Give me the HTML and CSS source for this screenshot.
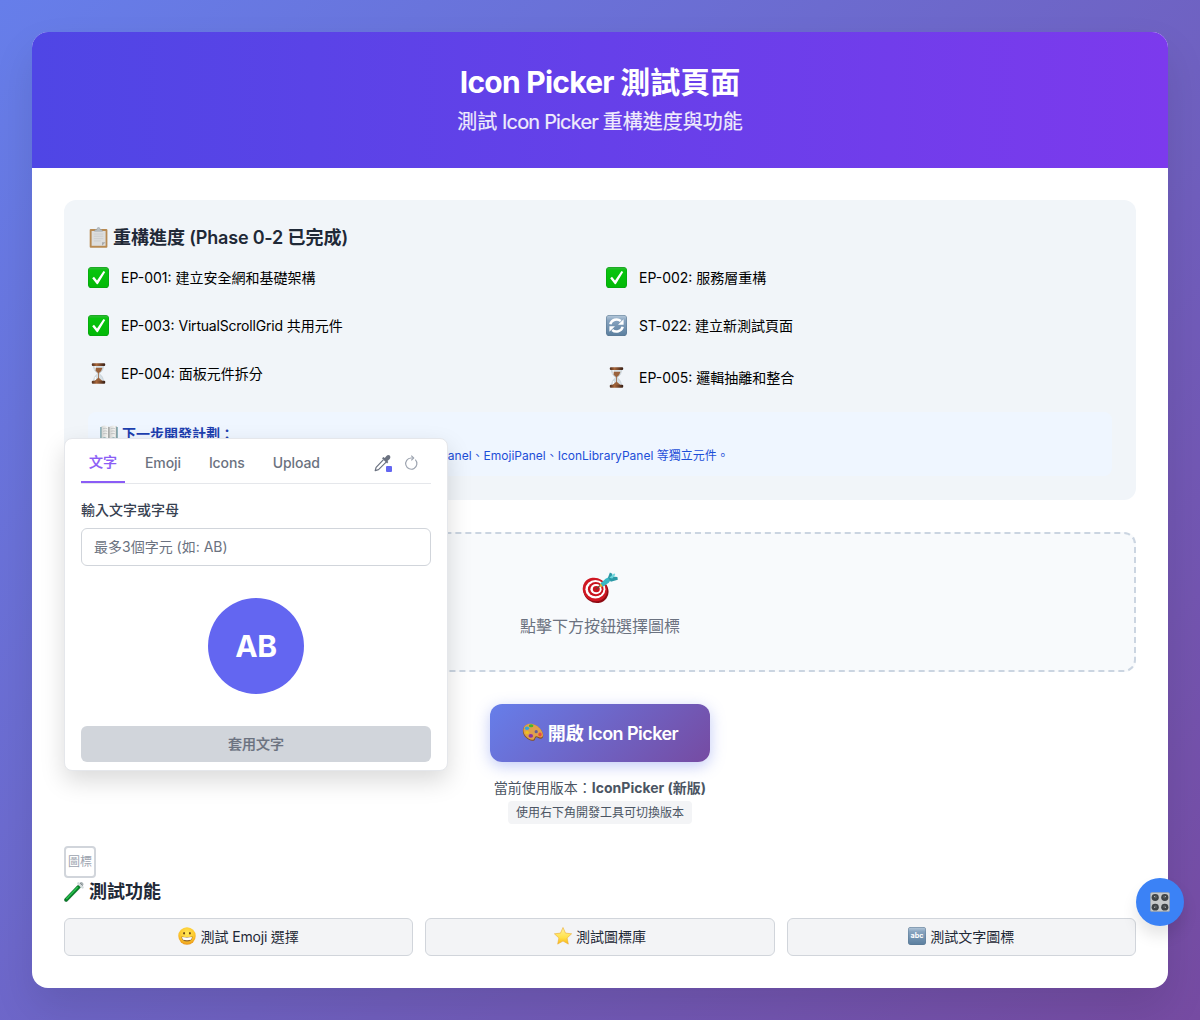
FILE: index.html
```html
<!DOCTYPE html>
<html lang="zh-TW">
<head>
<meta charset="UTF-8">
<title>Icon Picker 測試頁面</title>
<link rel="stylesheet" href="styles.css">
</head>
<body>
<svg class="defs" width="0" height="0" aria-hidden="true">
  <defs>
    <linearGradient id="g-green" x1="0" y1="0" x2="0" y2="1"><stop offset="0" stop-color="#35b83a"/><stop offset=".15" stop-color="#08c40d"/><stop offset="1" stop-color="#02b907"/></linearGradient>
    <linearGradient id="g-blue" x1="0" y1="0" x2="0" y2="1"><stop offset="0" stop-color="#b4c8da"/><stop offset=".25" stop-color="#87a3bf"/><stop offset="1" stop-color="#5b7f9f"/></linearGradient>
    <linearGradient id="g-wood" x1="0" y1="0" x2="1" y2="0"><stop offset="0" stop-color="#4b2c1d"/><stop offset=".35" stop-color="#a8663a"/><stop offset="1" stop-color="#351d14"/></linearGradient>
    <linearGradient id="g-star" x1="0" y1="0" x2="0" y2="1"><stop offset="0" stop-color="#fff3a0"/><stop offset=".6" stop-color="#ffe14a"/><stop offset="1" stop-color="#f9b717"/></linearGradient>
    <linearGradient id="g-page" x1="0" y1="0" x2="1" y2="0"><stop offset="0" stop-color="#d5d6d4"/><stop offset=".8" stop-color="#f7f7f5"/><stop offset="1" stop-color="#a9aaa8"/></linearGradient>
    <radialGradient id="g-face" cx=".5" cy=".35" r=".65"><stop offset="0" stop-color="#ffe95c"/><stop offset=".65" stop-color="#fdc82c"/><stop offset="1" stop-color="#e9961b"/></radialGradient>
    <symbol id="check" viewBox="0 0 21 21"><rect width="21" height="21" rx="3.6" fill="#079b12"/><rect x=".5" y=".5" width="20" height="20" rx="3.2" fill="url(#g-green)"/><path d="M4.2 11.3 6 9.8l3 3.6 6.5-9.3 1.7.8-7.1 11.8q-.8 1-1.6 0Z" fill="#fff"/></symbol>
    <symbol id="refresh" viewBox="0 0 21 21"><rect width="21" height="21" rx="3.6" fill="#5a7791"/><rect x=".5" y=".5" width="20" height="20" rx="3.2" fill="url(#g-blue)"/><g fill="none" stroke="#fff" stroke-width="2.5"><path d="M4.300 9.300A6.500 6.500 0 0 1 14.800 6M16.700 11.700A6.500 6.500 0 0 1 6.200 15"/></g><path d="M17.600 4.200v5.600h-5.600ZM3.400 16.800v-5.600h5.600Z" fill="#fff"/></symbol>
    <symbol id="hourglass" viewBox="0 0 21 21"><path d="M5.500 2.500h10q.2 5-4 7.800v.7q4.100 2.800 4 7.800h-10q-.1-5 4-7.800v-.7Q5.300 7.500 5.500 2.500Z" fill="#d6e0e6" stroke="#b4bfc5" stroke-width=".5"/><path d="M6.500 4.800h8q-.8 3.500-3.500 5.200h-1q-2.700-1.700-3.500-5.200ZM10.500 14.500l4.200 3.700H6.300Z" fill="#9a623c"/><path d="M10.500 10v5" stroke="#9a623c" stroke-width=".8"/><path d="M7.200 3.200v3.500M7.300 14v3" stroke="#fff" stroke-width="1"/><rect x="3.800" y=".2" width="13.400" height="2.900" rx="1" fill="url(#g-wood)"/><rect x="3.800" y="17.800" width="13.400" height="2.900" rx="1" fill="url(#g-wood)"/></symbol>
    <symbol id="clipboard" viewBox="0 0 21 21"><rect x="1.700" y="2" width="17.700" height="18.700" rx="1" fill="#b88a52"/><path d="M3.600 4h14v14.800h-14Z" fill="#dcdddd"/><path d="M14 18.800v-3.600h3.600Z" fill="#a9aaab"/><path d="M5.800 7h9.500M5.800 9.300h9.500M5.800 11.600h9.500M5.800 13.900h7" stroke="#c9cbcc" stroke-width=".8"/><path d="M6.500 4.300q0-2 2.500-2 .2-2 1.500-2t1.500 2q2.500 0 2.500 2Z" fill="#b9c0c4" stroke="#8c969c" stroke-width=".4"/></symbol>
    <symbol id="book" viewBox="0 0 21 21"><path d="M.5 3.500h20v15h-20Z" fill="#4c8790"/><path d="M1.600 2.500q5-2 8.900 1v14q-4-3-8.900-1Z" fill="url(#g-page)"/><path d="M19.400 2.500q-5-2-8.900 1v14q4-3 8.900-1Z" fill="url(#g-page)"/><path d="M3.500 5.500q3-1 5 0m-5 3q3-1 5 0m-5 3q3-1 5 0m4-6q3-1 5 0m-5 3q3-1 5 0m-5 3q3-1 5 0" stroke="#a5a9ab" stroke-width=".6" fill="none"/><path d="M10.500 3.500v14" stroke="#75797b" stroke-width=".7"/></symbol>
    <symbol id="target" viewBox="0 0 36 36"><ellipse cx="13.900" cy="18.800" rx="13" ry="11.900" transform="rotate(35 13.900 18.800)" fill="#8d0b13"/><ellipse cx="12.900" cy="17.500" rx="12.500" ry="11.500" transform="rotate(35 12.900 17.500)" fill="#cf1722"/><ellipse cx="13.400" cy="17.200" rx="10" ry="9.200" fill="#fff"/><ellipse cx="13.700" cy="17.200" rx="7.800" ry="7.100" fill="#c9131e"/><ellipse cx="14" cy="17.200" rx="5.600" ry="5.100" fill="#fff"/><ellipse cx="14.300" cy="17.100" rx="3.500" ry="3.200" fill="#c9131e"/><path d="m14 17.300 5.500-5.300" stroke="#5b4b36" stroke-width="1.100"/><path d="m17.300 13.200 2.500-2.700 2.200 2.300-2.900 2.400Z" fill="#e8b629"/><path d="m18.600 11.300 5-4.500 4.400-2.400 1.800 1.800-3 4.600-5.900 3.900Z" fill="#39b6c4"/><path d="m26 5.600 1.900-5.200 2.400 1.400.1 2.700 5 .6.400 2.700-7 2Z" fill="#2b99a6"/><path d="m27.300 5.700 5-4.500 1 1.600-3 3.800Z" fill="#6ed6dc"/></symbol>
    <symbol id="palette" viewBox="0 0 22 22"><path d="M2.700 5.300C7 .7 15.500 3.500 19.300 9.300c2.800 4.300 2.600 8.600-.8 8.400-2.300-.1-3.200-2.300-4.800-1-1.200 1-.1 3.100-3.200 3.100C4 19.400-2.300 11 2.700 5.300Z" fill="#8c5216"/><path d="M2.900 4.800C7.200.5 15.400 3.300 19.100 8.900c2.700 4.100 2.500 7.900-.6 7.700-2.300-.2-3.500-2.200-5.200-.9-1.300 1-.3 3.100-3.200 3C4.300 18.200-1.500 10.400 2.900 4.800Z" fill="#dfa04d"/><circle cx="14.200" cy="10.700" r="1.600" fill="#665d99"/><ellipse cx="9.100" cy="4.700" rx="2.300" ry="1.500" fill="#45b72d"/><ellipse cx="5" cy="7.300" rx="2.200" ry="1.800" fill="#30a4dd"/><ellipse cx="5" cy="11.400" rx="1.900" ry="1.500" fill="#edc21d"/><ellipse cx="8.800" cy="14.900" rx="2.300" ry="1.800" fill="#8d31a6"/><ellipse cx="18" cy="13.500" rx="1.700" ry="2.100" fill="#ea4b42"/></symbol>
    <symbol id="tube" viewBox="0 0 21 21"><path d="M2.100 18.900 17.300 3.300" stroke="#a7b0b2" stroke-width="4.200" stroke-linecap="round"/><path d="M2.200 18.800 14.500 6.100" stroke="#087d26" stroke-width="3.600" stroke-linecap="round"/><path d="m2.300 17.900 11.500-12" stroke="#2cc453" stroke-width="1.400"/><path d="m14.300 2.300 4.300 4.100" stroke="#d5dcdd" stroke-width="2.400" stroke-linecap="round"/><path d="m16 2.100 2.600 2.400" stroke="#858e91" stroke-width="1"/></symbol>
    <symbol id="grin" viewBox="0 0 18 18"><circle cx="9" cy="9" r="8.700" fill="url(#g-face)"/><ellipse cx="6.100" cy="6.300" rx=".9" ry="1.300" fill="#6b4518"/><ellipse cx="11.900" cy="6.300" rx=".9" ry="1.300" fill="#6b4518"/><path d="M3.400 9.600q5.600 1 11.200 0-.4 5-5.600 5t-5.600-5Z" fill="#8f6226"/><path d="M4 10.100q5 .8 10 0-.2 1.700-1 2.700-4 .8-8 0-.8-1-1-2.700Z" fill="#fff"/></symbol>
    <symbol id="star" viewBox="0 0 18 18"><path d="m9 .5 2.500 5.600 6.100.7-4.500 4.200 1.200 6.100L9 14l-5.300 3.100L4.900 11 .4 6.800l6.100-.7Z" fill="url(#g-star)" stroke="#ecac31" stroke-width=".6" stroke-linejoin="round"/></symbol>
    <symbol id="abc" viewBox="0 0 18 18"><rect width="18" height="18" rx="3" fill="#5a7791"/><rect x=".4" y=".4" width="17.200" height="17.200" rx="2.700" fill="url(#g-blue)"/><text x="9" y="11" text-anchor="middle" textLength="13" lengthAdjust="spacingAndGlyphs" class="abc">abc</text></symbol>
    <symbol id="knobs" viewBox="0 0 20 20"><rect x=".2" y=".2" width="19.600" height="19.600" rx="1.600" fill="#a9adb0"/><rect x="1" y="1" width="18" height="18" rx="1" fill="#c6c9ca"/><g fill="#3e4346"><ellipse cx="5.200" cy="5.500" rx="3.600" ry="3.400"/><ellipse cx="14.800" cy="5.500" rx="3.600" ry="3.400"/><ellipse cx="5.200" cy="15.200" rx="3.600" ry="3.400"/><ellipse cx="14.800" cy="15.200" rx="3.600" ry="3.400"/></g><g fill="#5a6063"><circle cx="5.500" cy="5" r="1.400"/><circle cx="14.500" cy="5" r="1.400"/><circle cx="5.500" cy="14.700" r="1.400"/><circle cx="14.500" cy="14.700" r="1.400"/></g><path d="m5 5-1-1M15 5l1-1M5 15l-1 .7M15 15l1 .7" stroke="#d4d4d4" stroke-width=".7"/></symbol>
  </defs>
</svg>

<div class="card">
  <header class="hero">
    <h1><span class="latin">Icon Picker </span>測試頁面</h1>
    <p>測試<span class="latin"> Icon Picker </span>重構進度與功能</p>
  </header>

  <main class="content">
    <section class="progress">
      <h3><svg class="e21"><use href="#clipboard"/></svg><span>重構進度<span class="latin"> (Phase 0-2 </span>已完成)</span></h3>
      <div class="tasks">
        <div class="task"><svg class="e21"><use href="#check"/></svg><span>EP-001: 建立安全網和基礎架構</span></div>
        <div class="task"><svg class="e21"><use href="#check"/></svg><span>EP-002: 服務層重構</span></div>
        <div class="task"><svg class="e21"><use href="#check"/></svg><span>EP-003: <span class="latin">VirtualScrollGrid</span> 共用元件</span></div>
        <div class="task"><svg class="e21"><use href="#refresh"/></svg><span><span class="latin">ST-022:</span> 建立新測試頁面</span></div>
        <div class="task"><svg class="e21"><use href="#hourglass"/></svg><span>EP-004: 面板元件拆分</span></div>
        <div class="task tall"><svg class="e21"><use href="#hourglass"/></svg><span>EP-005: 邏輯抽離和整合</span></div>
      </div>
      <div class="next">
        <strong><svg class="e18"><use href="#book"/></svg>下一步開發計劃：</strong>
        <p>EP-004: 面板元件拆分 - 將把現有 IconPicker 拆分為 TextIconPanel、EmojiPanel、IconLibraryPanel 等獨立元件。</p>
      </div>
    </section>

    <section class="preview">
      <svg class="e36"><use href="#target"/></svg>
      <p>點擊下方按鈕選擇圖標</p>
    </section>

    <section class="launch">
      <button class="open"><svg class="e22"><use href="#palette"/></svg><span>開啟<span class="latin"> Icon Picker</span></span></button>
      <p class="version">當前使用版本：<strong>IconPicker (新版)</strong></p>
      <span class="hint">使用右下角開發工具可切換版本</span>
    </section>

    <button class="slot">圖標</button>

    <section class="tests">
      <h3><svg class="e21"><use href="#tube"/></svg>測試功能</h3>
      <div class="test-grid">
        <button><svg class="e18"><use href="#grin"/></svg><span>測試<span class="latin"> Emoji </span>選擇</span></button>
        <button><svg class="e18"><use href="#star"/></svg>測試圖標庫</button>
        <button><svg class="e18"><use href="#abc"/></svg>測試文字圖標</button>
      </div>
    </section>

    <div class="picker">
      <div class="tabs">
        <span class="tab active">文字</span>
        <span class="tab">Emoji</span>
        <span class="tab">Icons</span>
        <span class="tab">Upload</span>
        <span class="tools">
          <span class="dropper">
            <svg viewBox="0 0 18 18" width="18" height="18"><path d="m9.500 5.600-7.400 7.700-.9 3.300 3.300-1 7.600-7.500" fill="none" stroke="#6b7280" stroke-width="1.200" stroke-linejoin="round"/><path d="m8 4.200 1.500-1.100 1.300.9 1.600-2c2.400-2.400 5.300.5 3.300 2.900l-2.200 2 .8 1.200-1.200 1.300Z" fill="#6b7280"/></svg>
            <i class="swatch"></i>
          </span>
          <svg viewBox="0 0 14 16" width="14" height="16" fill="none" stroke="#9ca3af" stroke-width="1.150"><path d="M11.300 4.700A5.600 5.600 0 1 1 7 3h2.300"/><path d="m7.300.600 2.400 2.400-2.400 2.400"/></svg>
        </span>
      </div>
      <label>輸入文字或字母</label>
      <input type="text" placeholder="最多3個字元 (如: AB)">
      <div class="avatar">AB</div>
      <button class="apply" disabled>套用文字</button>
    </div>
  </main>
</div>

<button class="fab"><svg class="e20"><use href="#knobs"/></svg></button>
</body>
</html>
```

FILE: styles.css
```css
* { box-sizing: border-box; margin: 0; padding: 0; }

body {
  min-height: 1020px;
  padding: 32px;
  background: linear-gradient(135deg, #667eea 0%, #764ba2 100%);
  font-family: Inter, "Noto Sans CJK TC", sans-serif;
  font-size: 14px;
  color: #000;
}

button, input { font: inherit; }
svg { display: block; flex: none; }
.defs { position: absolute; }
.abc { font: bold 7px Inter, sans-serif; fill: #fff; }
.latin { white-space: pre; letter-spacing: -.2px; }

.e18 { width: 18px; height: 18px; }
.e20 { width: 20px; height: 20px; }
.e21 { width: 21px; height: 21px; }
.e22 { width: 22px; height: 22px; }
.e36 { width: 36px; height: 36px; }

.card {
  height: 956px;
  border-radius: 16px;
  background: #fff;
  box-shadow: 0 20px 40px rgba(0, 0, 0, .1);
}

.hero {
  height: 136px;
  padding-top: 30px;
  border-radius: 16px 16px 0 0;
  background: linear-gradient(90deg, #4f46e5, #7c3aed);
  color: #fff;
  text-align: center;
}
.hero h1 { font-size: 30px; line-height: 40px; font-weight: 700; }
.hero h1 .latin { letter-spacing: -.75px; }
.hero p {
  font-size: 20px;
  line-height: 28px;
  margin-top: 6px;
  opacity: .9;
  -webkit-text-stroke: .2px;
}
.hero p .latin { letter-spacing: -.82px; }

.content { position: relative; padding: 32px; }

.progress {
  height: 300px;
  padding: 24px;
  border-radius: 12px;
  background: #f1f5f9;
}
h3 {
  display: flex;
  align-items: center;
  gap: 4px;
  height: 28px;
  padding-bottom: 4px;
  font-size: 18px;
  font-weight: 600;
  color: #1f2937;
}
h3 svg { margin-top: 2px; }
.tasks {
  display: grid;
  grid-template-columns: 1fr 1fr;
  gap: 12px;
  margin-top: 7px;
  align-items: start;
}
.task { display: flex; align-items: center; gap: 12px; height: 36px; }
.task.tall { height: 44px; }
.next {
  height: 64px;
  margin-top: 13px;
  padding: 11px 12px;
  border-radius: 8px;
  background: #eff6ff;
}
.next strong {
  display: flex;
  align-items: center;
  gap: 4px;
  height: 20px;
  font-weight: 600;
  color: #1e40af;
}
.next p {
  font-size: 12px;
  line-height: 20px;
  margin-top: 3px;
  padding-left: 4px;
  color: #1d4ed8;
}

.preview {
  display: flex;
  flex-direction: column;
  align-items: center;
  height: 140px;
  margin-top: 32px;
  padding-top: 38px;
  border: 2px dashed #cbd5e1;
  border-radius: 12px;
  background: #f8fafc;
}
.preview p { font-size: 16px; line-height: 24px; margin-top: 6px; color: #6b7280; }

.launch {
  display: flex;
  flex-direction: column;
  align-items: center;
  margin-top: 32px;
}
.open {
  display: flex;
  align-items: center;
  justify-content: center;
  gap: 4px;
  width: 220px;
  height: 58px;
  padding-bottom: 3px;
  border: 0;
  border-radius: 12px;
  background: linear-gradient(135deg, #667eea 0%, #764ba2 100%);
  box-shadow: 0 4px 15px rgba(102, 126, 234, .4);
  color: #fff;
  font-size: 18px;
  font-weight: 600;
}
.open .latin { letter-spacing: -.55px; }
.version { margin-top: 16px; line-height: 20px; color: #4b5563; }
.version strong { font-weight: 700; }
.hint {
  height: 23px;
  margin-top: 3px;
  padding: 0 8px;
  border-radius: 4px;
  background: #f3f4f6;
  font-size: 12px;
  line-height: 23px;
  color: #4b5563;
}

.slot {
  display: block;
  width: 32px;
  height: 32px;
  margin-top: 22px;
  border: 2px solid #d1d5db;
  border-radius: 4px;
  background: #fff;
  color: #9ca3af;
  font-size: 12px;
  line-height: 28px;
}

.test-grid {
  display: grid;
  grid-template-columns: repeat(3, 1fr);
  gap: 12px;
  margin-top: 12px;
}
.test-grid button {
  display: flex;
  align-items: center;
  justify-content: center;
  gap: 4px;
  height: 38px;
  padding-bottom: 2px;
  border: 1px solid #d1d5db;
  border-radius: 6px;
  background: #f3f4f6;
  color: #1f2937;
}

.picker {
  position: absolute;
  left: 32px;
  top: 270px;
  width: 384px;
  height: 333px;
  padding: 0 16px;
  border: 1px solid #e5e7eb;
  border-radius: 8px;
  background: #fff;
  box-shadow: 0 10px 25px rgba(0, 0, 0, .15);
}
.tabs {
  display: flex;
  gap: 12px;
  height: 45px;
  border-bottom: 1px solid #e5e7eb;
  font-weight: 500;
  color: #6b7280;
}
.tab { height: 44px; padding: 0 8px; line-height: 48px; letter-spacing: -.1px; }
.tab.active {
  border-bottom: 2px solid #8b5cf6;
  color: #8b5cf6;
  line-height: 46px;
  letter-spacing: 0;
  -webkit-text-stroke: .2px;
}
.tools {
  display: flex;
  align-items: center;
  gap: 12px;
  margin-left: auto;
  padding: 4px 13px 0 0;
}
.dropper { position: relative; }
.swatch {
  position: absolute;
  right: 0;
  bottom: 0;
  width: 6px;
  height: 6px;
  border-radius: 1px;
  background: #6366f1;
}
.picker label {
  display: block;
  margin-top: 16px;
  font-weight: 500;
  line-height: 20px;
  color: #374151;
}
.picker input {
  display: block;
  width: 350px;
  height: 38px;
  margin-top: 8px;
  padding: 0 12px 2px;
  border: 1px solid #d1d5db;
  border-radius: 6px;
  background: #fff;
}
.picker input::placeholder { color: #6b7280; }
.avatar {
  width: 96px;
  height: 96px;
  margin: 32px auto;
  border-radius: 50%;
  background: #6366f1;
  color: #fff;
  font-size: 30px;
  font-weight: 700;
  line-height: 96px;
  letter-spacing: -.4px;
  text-align: center;
}
.apply {
  display: block;
  width: 350px;
  height: 36px;
  padding-bottom: 2px;
  border: 0;
  border-radius: 6px;
  background: #d1d5db;
  color: #6b7280;
  font-weight: 500;
  -webkit-text-stroke: .2px;
}

.fab {
  position: fixed;
  right: 16px;
  top: 878px;
  display: flex;
  align-items: center;
  justify-content: center;
  width: 48px;
  height: 48px;
  border: 0;
  border-radius: 50%;
  background: #3b82f6;
  box-shadow: 0 10px 15px rgba(0, 0, 0, .1);
}
```
